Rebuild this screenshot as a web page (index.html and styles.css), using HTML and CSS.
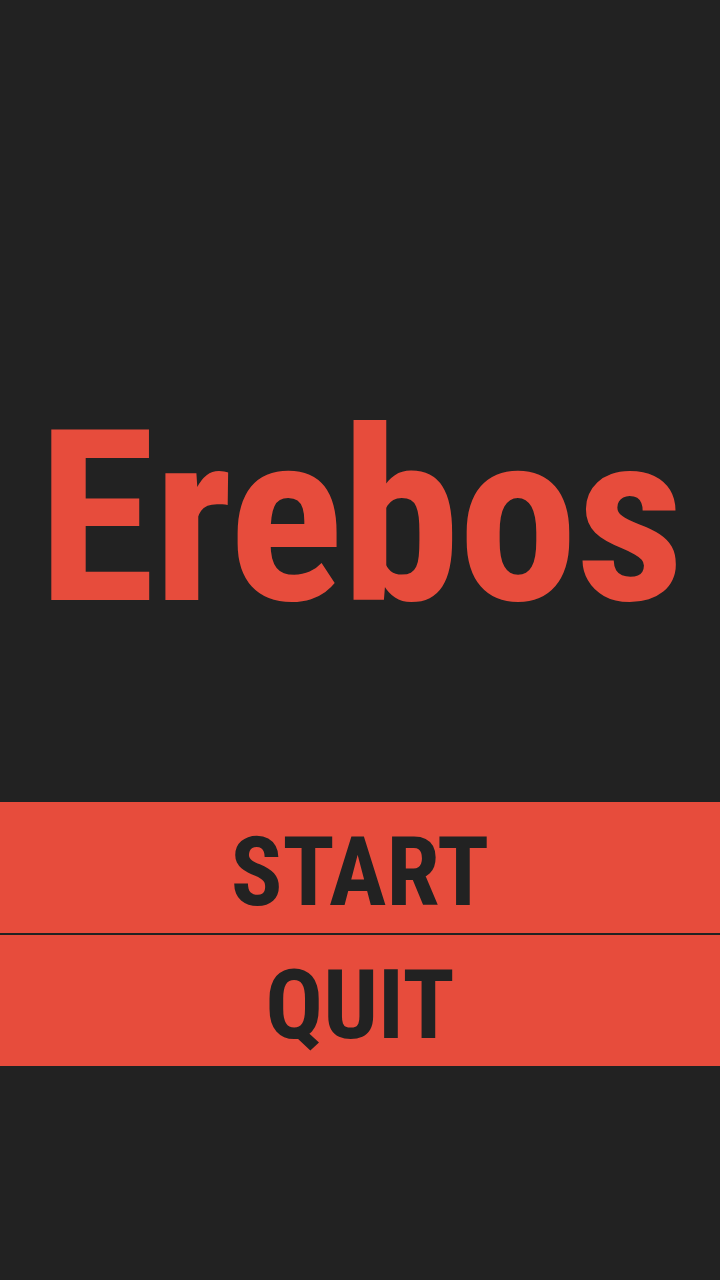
FILE: index.html
```html
<!DOCTYPE html>
<html lang="en">
<head>
<meta charset="utf-8">
<title>Erebos</title>
<link rel="stylesheet" href="styles.css">
</head>
<body>
<main class="screen">
  <h1 class="title">Erebos</h1>
  <nav class="menu">
    <button class="menu-btn">START</button>
    <button class="menu-btn">QUIT</button>
  </nav>
</main>
</body>
</html>
```
FILE: styles.css
```css
html, body {
  margin: 0;
  padding: 0;
  background: #222222;
}
.screen {
  width: 720px;
  height: 1280px;
  display: flex;
  flex-direction: column;
  font-family: "Roboto Condensed", Roboto, "Liberation Sans", sans-serif;
  font-stretch: condensed;
}
.title {
  margin: 0;
  padding-top: 398px;
  height: 802px;
  box-sizing: border-box;
  font-size: 240px;
  line-height: 240px;
  font-weight: 700;
  letter-spacing: -2px;
  color: #e74c3c;
  text-align: center;
}
.menu {
  display: flex;
  flex-direction: column;
  gap: 2px;
}
.menu-btn {
  display: block;
  width: 100%;
  height: 131px;
  box-sizing: border-box;
  margin: 0;
  border: 0;
  padding: 22px 0 13px;
  background: #e74c3c;
  color: #222222;
  font-family: inherit;
  font-stretch: condensed;
  font-size: 96px;
  line-height: 96px;
  font-weight: 700;
  text-align: center;
}
```
